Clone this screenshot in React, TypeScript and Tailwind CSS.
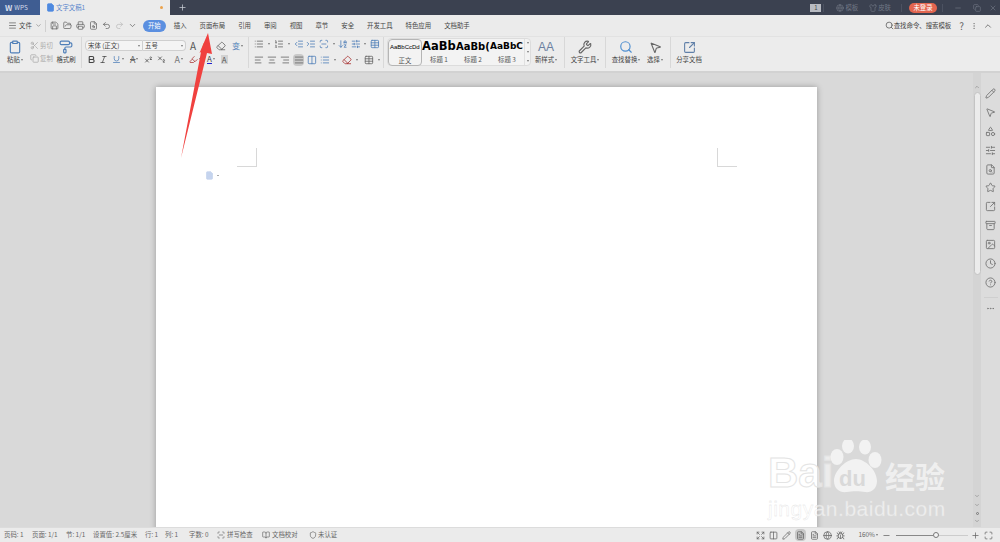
import React from "react";
import {
  AlignCenter, AlignJustify, AlignLeft, AlignRight, Archive, Bold, ChevronDown, ChevronUp, Clipboard, Clock, Columns2, Copy,
  Ellipsis, EllipsisVertical, Eraser, FileText, Globe, HelpCircle, Image as ImageIcon, Indent, Italic, List, ListOrdered,
  Maximize, Menu, Minus, MousePointer2, Outdent, PaintRoller, Pencil, Plus, Printer, Redo2, Save, Scissors, Search, SquareArrowOutUpRight, Shapes,
  Shirt, SlidersHorizontal, Star, Subscript, Superscript, Table, Undo2, Underline, Wrench, X, Shield, Highlighter, ArrowDownAZ, FileSearch, ScanLine, Bug, BookOpen, Expand, FolderOpen,
} from "lucide-react";

const font = { fontFamily: '"Noto Sans CJK SC", "Noto Sans", sans-serif' };
const latin = { fontFamily: '"Liberation Sans", sans-serif' };

function Caret() {
  return <span className="ml-px inline-block h-0 w-0 border-x-[1.5px] border-t-[2px] border-x-transparent border-t-[#777]" />;
}

function Tab({ label, active }: { label: string; active?: boolean }) {
  return (
    <span
      className={
        active
          ? "mr-[-5px] flex h-[12px] w-[23px] items-center justify-center rounded-full bg-[#5b8fe0] text-[6.4px] text-white"
          : "text-[6.4px] text-[#444]"
      }
    >
      {label}
    </span>
  );
}

function Big({ icon, label, caret, w }: { icon: React.ReactNode; label: string; caret?: boolean; w: string }) {
  return (
    <div className={`flex flex-col items-center ${w}`}>
      <div className="flex h-[15px] items-center">{icon}</div>
      <div className="flex items-center whitespace-nowrap text-[6.4px] leading-[10px] text-[#444]">
        {label}
        {caret && <Caret />}
      </div>
    </div>
  );
}

function Divider() {
  return <div className="mx-[3px] h-[31px] w-px bg-[#d8d8d8]" />;
}

function StyleCell({ sample, label, cls, active }: { sample: string; label: string; cls: string; active?: boolean }) {
  return (
    <div className={`flex h-[27px] w-[34px] flex-col items-center overflow-hidden ${active ? "rounded-sm border border-[#b5b5b5] bg-[#f3f3f3]" : ""}`}>
      <div className={`flex h-[16px] w-full items-center justify-start overflow-hidden whitespace-nowrap text-black ${cls}`} style={active ? latin : { fontFamily: '"DejaVu Sans", sans-serif' }}>
        {sample}
      </div>
      <div className="text-[6.4px] leading-[9px] text-[#555]">{label}</div>
    </div>
  );
}

const ic = "text-[#666]";
const sideIcons = [Pencil, MousePointer2, Shapes, SlidersHorizontal, FileSearch, Star, SquareArrowOutUpRight, Archive, ImageIcon, Clock, HelpCircle];

export default function App() {
  return (
    <div className="relative flex h-[542px] w-[1000px] flex-col overflow-hidden bg-[#d9d9d9]" style={font}>
      {/* title bar */}
      <div className="flex h-[15px] shrink-0 items-stretch bg-[#3b4150]">
        <div className="flex w-[40px] items-center gap-[2px] bg-[#3f5d92] pl-[5px] text-[6.4px] text-[#d5dcea]">
          <span className="text-[8px] font-bold leading-none">W</span>
          <span>WPS</span>
        </div>
        <div className="flex w-[130px] items-center bg-[#ebebeb] pl-[6px] text-[6.4px] text-[#5a86cc]">
          <FileText size={9} className="mr-[1px] fill-[#4f8ae0] text-[#4f8ae0]" />
          <span>文字文稿1</span>
          <span className="ml-auto mr-[7px] h-[3px] w-[3px] rounded-full bg-[#eba24b]" />
        </div>
        <div className="flex w-[25px] items-center justify-center text-[#c8ccd4]">
          <Plus size={9} strokeWidth={2} />
        </div>
        <div className="ml-auto flex items-center text-[6.4px] text-[#707684]">
          <span className="mr-[2px] flex h-[8px] w-[11px] items-center justify-center bg-[#b8bbc2] text-[6px] text-[#444]">1</span>
          <div className="mr-[12px] h-[8px] w-px bg-[#4c5261]" />
          <Globe size={8} className="mr-px" />
          <span className="mr-[11px]">模板</span>
          <Shirt size={8} className="mr-px" />
          <span className="mr-[10px]">皮肤</span>
          <div className="mr-[7px] h-[8px] w-px bg-[#4c5261]" />
          <span className="mr-[5px] flex h-[10px] w-[28px] items-center justify-center rounded-full bg-[#e2654f] text-[6.4px] text-white">未登录</span>
          <div className="mr-[11px] h-[8px] w-px bg-[#4c5261]" />
          <Minus size={8} className="mr-[11px]" />
          <Copy size={8} className="mr-[8px]" />
          <X size={8} className="mr-[3px]" />
        </div>
      </div>

      {/* menu row */}
      <div className="flex h-[21px] shrink-0 items-center bg-[#ebebeb] text-[6.4px] text-[#444]">
        <Menu size={9} className="ml-[8px] text-[#666]" />
        <span className="ml-[2px]">文件</span>
        <ChevronDown size={7} className="ml-[3px] text-[#777]" />
        <div className="ml-[3px] h-[12px] w-px bg-[#d0d0d0]" />
        <div className="ml-[4px] flex items-center gap-[4px] text-[#666]">
          <Save size={9} />
          <FolderOpen size={9} />
          <Printer size={9} />
          <FileSearch size={9} />
          <Undo2 size={9} />
          <Redo2 size={9} className="text-[#bbb]" />
          <ChevronDown size={9} />
        </div>
        <div className="ml-[6px] flex items-center gap-[13px]">
          <Tab label="开始" active />
          <Tab label="插入" />
          <Tab label="页面布局" />
          <Tab label="引用" />
          <Tab label="审阅" />
          <Tab label="视图" />
          <Tab label="章节" />
          <Tab label="安全" />
          <Tab label="开发工具" />
          <Tab label="特色应用" />
          <Tab label="文档助手" />
        </div>
        <div className="ml-auto flex items-center">
          <Search size={9} className="text-[#555]" />
          <span className="mr-[8px] text-[#444]">查找命令、搜索模板</span>
          <span className="mr-[6px] text-[10px] leading-none text-[#666]">?</span>
          <EllipsisVertical size={8} className="mr-[5px] text-[#888]" />
          <ChevronUp size={10} className="mr-[7px] text-[#666]" />
        </div>
      </div>

      {/* ribbon */}
      <div className="flex h-[35px] shrink-0 items-center border-t border-[#e2e2e2] bg-[#ececec] pb-[4px] pl-[4px]">
        <Big w="w-[22px]" icon={<Clipboard size={14} className="text-[#4f7fb8]" />} label="粘贴" caret />
        <div className="ml-[4px] flex w-[24px] flex-col gap-[3px] text-[6.4px] leading-[10px] text-[#aaa]">
          <div className="flex items-center gap-[1px]"><Scissors size={9} />剪切</div>
          <div className="flex items-center gap-[1px]"><Copy size={9} />复制</div>
        </div>
        <Big w="w-[24px]" icon={<PaintRoller size={14} className="text-[#4f7fb8]" />} label="格式刷" />
        <Divider />

        {/* font group */}
        <div className="flex w-[160px] flex-col gap-[3px]">
          <div className="flex items-center">
            <div className="flex h-[11px] w-[58px] items-center justify-between rounded-l-sm border border-[#cfcfcf] bg-[#f4f4f4] px-[2px] text-[6.4px] text-[#444]">宋体 (正文)<Caret /></div>
            <div className="flex h-[11px] w-[43px] items-center justify-between rounded-r-sm border border-l-0 border-[#cfcfcf] bg-[#f4f4f4] px-[2px] text-[6.4px] text-[#444]">五号<Caret /></div>
            <span className="ml-[4px] text-[10px] leading-none text-[#555]">A</span>
            <span className="ml-[6px] text-[8px] leading-none text-[#555]">A</span>
            <Eraser size={10} className="ml-[9px] text-[#666]" />
            <span className="ml-[6px] text-[8px] leading-none text-[#4f7fb8]">变</span><Caret />
          </div>
          <div className="flex items-center pl-[2px] text-[#444]">
            <Bold size={9} strokeWidth={3} />
            <Italic size={9} className="ml-[3px]" />
            <Underline size={9} className="ml-[4px] text-[#4f7fb8]" /><Caret />
            <span className="ml-[6px] text-[9px] leading-none text-[#666] line-through">A</span><Caret />
            <Superscript size={9} className="ml-[6px]" />
            <Subscript size={9} className="ml-[4px]" />
            <span className="ml-[8px] text-[9px] leading-none text-[#777]">A</span><Caret />
            <Highlighter size={9} className="ml-[6px] text-[#a33]" /><Caret />
            <span className="ml-[6px] border-b border-[#2222cc] text-[8px] leading-[9px] text-[#444]">A</span><Caret />
            <span className="ml-[6px] bg-[#d2d2d2] px-[1px] text-[8px] leading-[9px] text-[#555]">A</span>
          </div>
        </div>
        <Divider />

        {/* paragraph group */}
        <div className="flex w-[128px] flex-col gap-[5px] pl-[2px]">
          <div className="flex items-center gap-[3px] text-[#666]">
            <List size={10} /><Caret />
            <ListOrdered size={10} className="ml-[1px]" /><Caret />
            <Outdent size={10} className="ml-[1px] text-[#4f7fb8]" />
            <Indent size={10} className="text-[#4f7fb8]" />
            <ScanLine size={10} className="text-[#4f7fb8]" /><Caret />
            <ArrowDownAZ size={10} className="text-[#4f7fb8]" />
            <SlidersHorizontal size={10} className="text-[#4f7fb8]" /><Caret />
            <Table size={10} className="ml-[1px] text-[#4f7fb8]" />
          </div>
          <div className="flex items-center gap-[3px] text-[#666]">
            <AlignLeft size={10} />
            <AlignCenter size={10} />
            <AlignRight size={10} />
            <span className="flex h-[12px] w-[12px] items-center justify-center rounded-sm bg-[#c9c9c9]"><AlignJustify size={10} /></span>
            <Columns2 size={10} className="text-[#4f7fb8]" />
            <List size={10} className="text-[#4f7fb8]" /><Caret />
            <Eraser size={10} className="ml-[3px] text-[#a33]" /><Caret />
            <Table size={10} className="ml-[3px]" /><Caret />
          </div>
        </div>
        <Divider />

        {/* styles */}
        <div className="flex h-[28px] w-[144px] items-center rounded-sm border border-[#dcdcdc] bg-[#f3f3f3]">
          <StyleCell active sample="AaBbCcDd" label="正文" cls="pl-px text-[6px]" />
          <StyleCell sample="AaBb" label="标题 1" cls="text-[11.5px] font-bold" />
          <StyleCell sample="AaBb(" label="标题 2" cls="text-[10px] font-bold" />
          <StyleCell sample="AaBbC" label="标题 3" cls="text-[9px] font-bold" />
          <div className="ml-auto flex h-full w-[6px] flex-col items-center justify-around border-l border-[#e0e0e0]"><Caret /><Caret /><Caret /></div>
        </div>
        <Big w="w-[30px]" icon={<span className="text-[12px] leading-[13px] text-[#6a7fa0]" style={latin}>AA</span>} label="新样式" caret />
        <Divider />
        <Big w="w-[34px]" icon={<Wrench size={14} className={ic} />} label="文字工具" caret />
        <Divider />
        <Big w="w-[34px]" icon={<Search size={14} className="text-[#4f8fd0]" />} label="查找替换" caret />
        <Big w="w-[24px]" icon={<MousePointer2 size={13} className={ic} />} label="选择" caret />
        <Divider />
        <Big w="w-[30px]" icon={<SquareArrowOutUpRight size={13} className="text-[#5f7fa8]" />} label="分享文档" />
      </div>
      <div className="h-[2px] shrink-0 bg-[#d2d2d2]" />

      {/* workspace */}
      <div className="flex min-h-0 flex-1 bg-[#d9d9d9]">
        <div className="min-w-0 flex-1 pl-[156px] pt-[14px]">
          <div className="h-[460px] w-[661px] bg-white shadow-[0_0_6px_rgba(0,0,0,0.3)]">
            <div className="flex justify-between pl-[81px] pr-[80px] pt-[61px]">
              <div className="h-[19px] w-[20px] border-b border-r border-[#d8d8d8]" />
              <div className="h-[19px] w-[20px] border-b border-l border-[#d8d8d8]" />
            </div>
            <div className="ml-[49px] mt-[4px] flex items-center gap-[3px]">
              <FileText size={9} className="fill-[#c5d4ee] text-[#c5d4ee]" />
              <span className="h-px w-[2px] bg-[#aaa]" />
            </div>
          </div>
        </div>

        {/* scrollbar */}
        <div className="flex w-[8px] flex-col items-center bg-[#d4d4d4]">
          <ChevronUp size={6} className="mt-[11px] text-[#777]" />
          <div className="mt-[2px] h-[183px] w-[7px] rounded-full border border-[#c4c4c4] bg-[#ececec]" />
          <div className="mb-[3px] mt-auto flex flex-col items-center gap-[3.5px] text-[#777]">
            <ChevronDown size={6} />
            <ChevronDown size={6} />
            <span className="h-[3px] w-[3px] rounded-full border border-[#777]" />
            <ChevronDown size={6} />
          </div>
        </div>

        {/* side panel */}
        <div className="flex w-[19px] flex-col items-center bg-[#dcdcdc] pt-[11px] text-[#777]">
          {sideIcons.map((Icon, i) => (
            <div key={i} className="flex h-[18.9px] items-center justify-center">
              <Icon size={11} />
            </div>
          ))}
          <div className="mt-[5px] h-px w-[14px] bg-[#cfcfcf]" />
          <Ellipsis size={9} className="mt-[6px]" />
        </div>
      </div>

      {/* status bar */}
      <div className="relative flex h-[15px] shrink-0 items-center border-t border-[#dcdcdc] bg-[#ebebeb] pl-[4px] text-[6.4px] text-[#666]">
        <span className="w-[28px]">页码: 1</span>
        <span className="w-[34px]">页面: 1/1</span>
        <span className="w-[27px]">节: 1/1</span>
        <span className="w-[52px]">设置值: 2.5厘米</span>
        <span className="w-[20px]">行: 1</span>
        <span className="w-[24px]">列: 1</span>
        <span className="w-[28px]">字数: 0</span>
        <ScanLine size={8} />
        <span className="ml-[2px] w-[35px]">拼写检查</span>
        <BookOpen size={8} />
        <span className="ml-[2px] w-[37px]">文档校对</span>
        <Shield size={8} />
        <span className="ml-[1px]">未认证</span>

        <div className="ml-auto flex items-center text-[#666]">
          <Expand size={9} className="mr-[4px]" />
          <Columns2 size={9} className="mr-[4px]" />
          <Pencil size={9} className="mr-[4px]" />
          <span className="mr-[4px] flex h-[12px] w-[11px] items-center justify-center rounded-sm bg-[#c8c8c8]"><FileText size={9} /></span>
          <FileText size={9} className="mr-[4px]" />
          <Globe size={9} className="mr-[4px]" />
          <Bug size={9} className="mr-[13px]" />
          <span>160%</span>
          <Caret />
          <Minus size={9} className="ml-[4px] mr-[5px]" />
          <div className="flex w-[72px] items-center">
            <div className="h-px w-[37px] bg-[#888]" />
            <div className="h-[6px] w-[6px] rounded-full border border-[#777] bg-[#f4f4f4]" />
            <div className="h-px flex-1 bg-[#ccc]" />
          </div>
          <Plus size={9} className="ml-[3px] mr-[4px]" />
          <Maximize size={9} className="mr-[7px]" />
        </div>
      </div>

      {/* red annotation arrow */}
      <svg className="pointer-events-none absolute left-0 top-0" width="1000" height="542">
        <polygon points="181,158 201,52 199.5,53 208,33 212,54 207,53" fill="#f0413f" />
      </svg>

      {/* watermark */}
      <div className="pointer-events-none absolute left-[768px] top-[440px] h-[84px] w-[190px]">
        <span className="absolute left-0 top-[11px] text-[42px] font-bold leading-[44px] text-white/50 [-webkit-text-stroke:1px_#e4e4e4]" style={latin}>Bai</span>
        <svg className="absolute left-[60px] top-0" width="60" height="58" viewBox="0 0 60 58">
          <g fill="#fff" fillOpacity="0.65">
            <ellipse cx="9" cy="17" rx="6.5" ry="8" />
            <ellipse cx="20" cy="6" rx="6" ry="7.5" />
            <ellipse cx="37" cy="7" rx="6" ry="7.5" />
            <ellipse cx="47" cy="20" rx="6.5" ry="8" />
            <path d="M28 19c9 0 21 11 21 22 0 8-6 12-12 11-5-1-13-1-18 0-7 1-13-3-13-11 0-10 12-22 22-22z" />
          </g>
        </svg>
        <span className="absolute left-[71px] top-[27px] text-[22px] font-bold leading-[24px] text-[#d9d9d9]" style={latin}>du</span>
        <span className="absolute left-[117px] top-[18px] text-[30px] font-bold leading-[34px] text-white/60">经验</span>
        <span className="absolute left-0 top-[57px] whitespace-nowrap text-[21px] leading-[24px] tracking-[0.5px] text-white/60 [-webkit-text-stroke:0.3px_#e0e0e0]" style={latin}>jingyan.baidu.com</span>
      </div>
    </div>
  );
}
